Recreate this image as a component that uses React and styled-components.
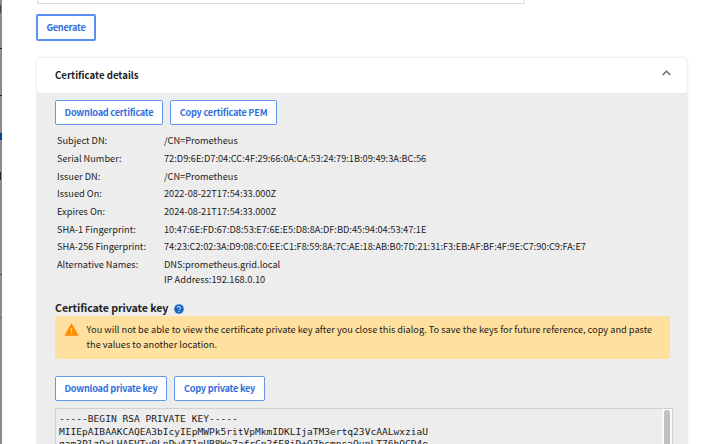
import React from "react";
import styled, { createGlobalStyle } from "styled-components";

const Global = createGlobalStyle`
  * { box-sizing: border-box; }
  body { margin: 0; overflow: hidden; background: #fff; }
  svg { flex: none; display: block; }
`;

const Screen = styled.div`
  display: flex;
  width: 720px;
  height: 444px;
  overflow: hidden;
  font-family: "Noto Sans CJK SC", "Noto Sans", sans-serif;
  font-size: 9.23px;
  color: #1c1c1c;
`;

const Backdrop = styled.div`
  flex: none;
  width: 2px;
  height: 444px;
  background:
    linear-gradient(#444, #444) 0 5px / 1px 8px no-repeat,
    linear-gradient(#222, #222) 0 48px / 2px 1px no-repeat,
    linear-gradient(#222, #222) 0 95px / 2px 1px no-repeat,
    linear-gradient(#123f94, #123f94) 0 133px / 2px 7px no-repeat,
    linear-gradient(#222, #222) 0 172px / 1px 8px no-repeat,
    linear-gradient(#444, #444) 0 274px / 2px 1px no-repeat,
    linear-gradient(#666, #666) 0 317px / 2px 1px no-repeat,
    #8c8c8c;
`;

const Dialog = styled.main`
  flex: 1;
  display: flex;
  flex-direction: column;
  align-items: flex-start;
  padding-left: 35px;

  > * { flex: none; }
`;

const FieldEdge = styled.div`
  width: 488px;
  height: 4px;
  border: 1px solid #dcdcdc;
  border-top: 0;
`;

const Button = styled.button`
  width: ${(p) => p.$w}px;
  height: ${(p) => (p.$focus ? 27 : 25)}px;
  margin: ${(p) => (p.$focus ? "10px 0 0 -1px" : "0")};
  padding: 0 0 1px;
  border: ${(p) => (p.$focus ? "2px solid #5b8ff0" : "1px solid #6596ee")};
  border-radius: 2px;
  background: #fff;
  color: #326fde;
  font: 700 9.2px/20px "Noto Sans CJK SC", "Noto Sans", sans-serif;
  letter-spacing: -0.25px;
  white-space: nowrap;
`;

const Panel = styled.section`
  width: 650px;
  height: 420px;
  margin-top: 17px;
  background: #ededed;
  border-radius: 3px;
  box-shadow: 0 0 3px rgba(0, 0, 0, 0.16);
`;

const PanelHeader = styled.header`
  display: flex;
  align-items: center;
  justify-content: space-between;
  height: 35px;
  padding: 0 16px 1px 18px;
  background: #fff;
  border-radius: 3px;
`;

const Chevron = styled.svg`
  margin-top: -4px;
`;

const Title = styled.h2`
  margin: 0;
  color: #222;
  font-size: ${(p) => p.$size}px;
  font-weight: 700;
  line-height: 16px;
  letter-spacing: ${(p) => p.$ls || 0}px;
  white-space: nowrap;
`;

const PanelBody = styled.div`
  padding: 7px 15px 0 18px;
`;

const ButtonRow = styled.div`
  display: flex;
  gap: 7px;
`;

const Details = styled.dl`
  display: grid;
  grid-template-columns: 107px 1fr;
  grid-auto-rows: 17.65px;
  margin: 7.4px 0 0 2px;
  line-height: 17.65px;
  white-space: nowrap;
`;

const Label = styled.dt`
  font-size: 9.23px;
`;

const Value = styled.dd`
  margin: 0;
`;

const SecondValue = styled(Value)`
  grid-column: 2;
  margin-top: -3px;
`;

const KeyHeading = styled.div`
  display: flex;
  align-items: center;
  gap: 6px;
  height: 16px;
  margin-top: 8.6px;
`;

const HelpIcon = styled.svg`
  margin-top: 2px;
`;

const Warning = styled.div`
  display: flex;
  gap: 7.6px;
  width: 615px;
  height: 43px;
  padding: 6px 9px;
  border-radius: 2px;
  background: #ffe09f;
  line-height: 15.4px;
  white-space: nowrap;
`;

const KeyButtons = styled(ButtonRow)`
  margin-top: 17px;
`;

const KeyBox = styled.div`
  display: flex;
  justify-content: space-between;
  width: 618px;
  height: 90px;
  margin-top: 7px;
  border: 1px solid #d0d0d0;
`;

const KeyText = styled.pre`
  margin: 4.6px 0 0 3px;
  color: #1c1c1c;
  font: 9.58px/12.4px "DejaVu Sans Mono", monospace;
`;

const ScrollTrack = styled.div`
  width: 10px;
  padding: 1px 2px;
  background: #fafafa;
`;

const ScrollThumb = styled.div`
  height: 100px;
  border-radius: 3px;
  background: #c1c1c1;
`;

const rows = [
  ["Subject DN:", "/CN=Prometheus"],
  ["Serial Number:", "72:D9:6E:D7:04:CC:4F:29:66:0A:CA:53:24:79:1B:09:49:3A:BC:56"],
  ["Issuer DN:", "/CN=Prometheus"],
  ["Issued On:", "2022-08-22T17:54:33.000Z"],
  ["Expires On:", "2024-08-21T17:54:33.000Z"],
  ["SHA-1 Fingerprint:", "10:47:6E:FD:67:D8:53:E7:6E:E5:D8:8A:DF:BD:45:94:04:53:47:1E"],
  ["SHA-256 Fingerprint:", "74:23:C2:02:3A:D9:08:C0:EE:C1:F8:59:8A:7C:AE:18:AB:B0:7D:21:31:F3:EB:AF:BF:4F:9E:C7:90:C9:FA:E7"],
  ["Alternative Names:", "DNS:prometheus.grid.local"],
];

const keyLines = [
  "-----BEGIN RSA PRIVATE KEY-----",
  "MIIEpAIBAAKCAQEA3bIcyIEpMWPk5ritVpMkmIDKLIjaTM3ertq23VcAALwxziaU",
  "gam3PlzOxLHAEVTv0LnPw471nUB8We7afrCn2fE8iD+Q7bsmnsaQunLT76hQCD4e",
].join("\n");

export default function App() {
  return (
    <Screen>
      <Global />
      <Backdrop />
      <Dialog>
        <FieldEdge />
        <Button $w={60} $focus>Generate</Button>
        <Panel>
          <PanelHeader>
            <Title $size={9.65}>Certificate details</Title>
            <Chevron width="9" height="6" viewBox="0 0 9 6" fill="none" stroke="#777" strokeWidth="1.7">
              <path d="M.8 5 4.5 1.2 8.2 5" />
            </Chevron>
          </PanelHeader>
          <PanelBody>
            <ButtonRow>
              <Button $w={108}>Download certificate</Button>
              <Button $w={107}>Copy certificate PEM</Button>
            </ButtonRow>
            <Details>
              {rows.map(([label, value]) => (
                <React.Fragment key={label}>
                  <Label>{label}</Label>
                  <Value>{value}</Value>
                </React.Fragment>
              ))}
              <SecondValue>IP Address:192.168.0.10</SecondValue>
            </Details>
            <KeyHeading>
              <Title $size={10.7} $ls={-0.1}>Certificate private key</Title>
              <HelpIcon width="10" height="10" viewBox="0 0 10 10">
                <circle cx="5" cy="5" r="4.8" fill="#1667c4" />
                <path d="M3.5 3.9a1.5 1.5 0 1 1 2.3 1.2q-.8.5-.8 1M5 7v1" fill="none" stroke="#fff" strokeWidth="1" />
              </HelpIcon>
            </KeyHeading>
            <Warning>
              <svg width="15" height="14" viewBox="0 0 15 14">
                <path d="M7.5 1.3 14.7 13.7H.3z" fill="#ff8a00" />
                <path d="M7.5 6v3.6M7.5 10.7v1.3" stroke="#ffe09f" strokeWidth="1.3" />
              </svg>
              <div>
                <div>You will not be able to view the certificate private key after you close this dialog. To save the keys for future reference, copy and paste</div>
                <div>the values to another location.</div>
              </div>
            </Warning>
            <KeyButtons>
              <Button $w={112}>Download private key</Button>
              <Button $w={91}>Copy private key</Button>
            </KeyButtons>
            <KeyBox>
              <KeyText>{keyLines}</KeyText>
              <ScrollTrack><ScrollThumb /></ScrollTrack>
            </KeyBox>
          </PanelBody>
        </Panel>
      </Dialog>
    </Screen>
  );
}
